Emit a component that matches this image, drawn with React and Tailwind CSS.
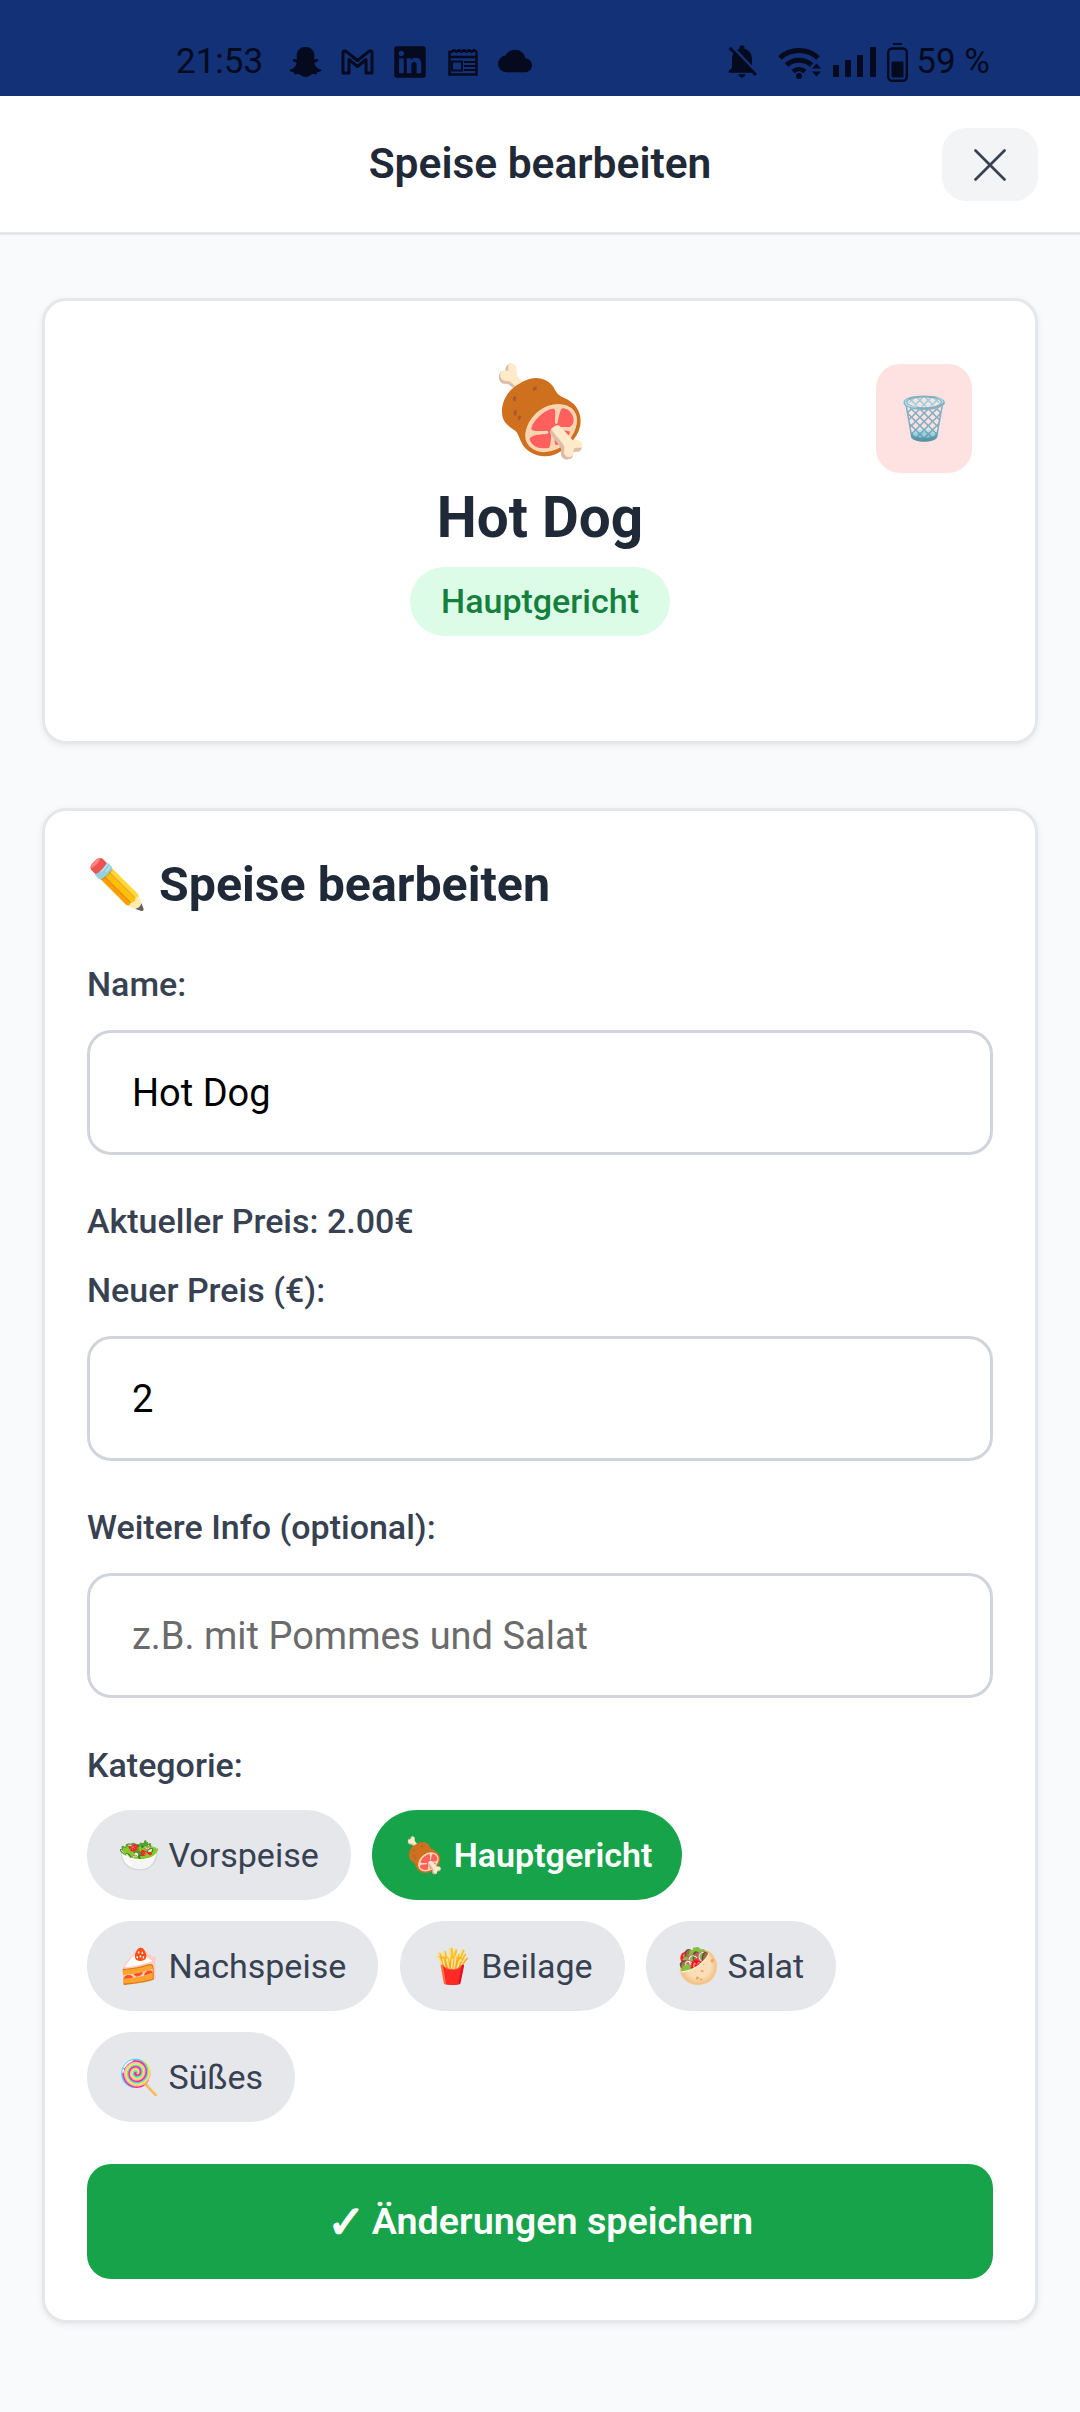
import React from 'react';
import { X } from 'lucide-react';
import { FaSnapchatGhost, FaLinkedin } from 'react-icons/fa';
import { MdCloud, MdNotificationsOff } from 'react-icons/md';

const roboto = { fontFamily: 'Roboto, "Noto Sans", sans-serif' };

const GmailIcon = () => (
  <svg viewBox="0 0 33 26" className="w-[33px] h-[26px] ml-[19px]" fill="none" stroke="currentColor" strokeWidth="3" strokeLinejoin="round">
    <path d="M2 24V3.5C2 2 4 1.5 5 2.3L16.500 11.500 28 2.300C29 1.500 31 2 31 3.500V24H25V10.500L16.500 17.500 8 10.500V24Z" />
  </svg>
);

const NewsIcon = () => (
  <svg viewBox="0 0 30 27" className="w-[30px] h-[27px] ml-[20px]" fill="none" stroke="currentColor" strokeWidth="2.500">
    <path d="M1.500 3V25.500H28.500V3L26 1 23.500 3 21 1 18.500 3 16 1 13.500 3 11 1 8.500 3 6 1 3.500 3Z" />
    <path d="M1.500 8H28.500" />
    <path d="M4 12.500H14V21.500H4Z" strokeWidth="2" />
    <path d="M16 13H28M16 17H28M16 21H28" strokeWidth="1.800" />
  </svg>
);

const WifiIcon = () => (
  <svg viewBox="0 0 44 34" className="w-[44px] h-[34px] ml-[16px]" fill="none" stroke="currentColor">
    <path d="M2 13C12 3 30 3 40 13" strokeWidth="5" />
    <path d="M8.500 20C15 13.500 27 13.500 33.500 20" strokeWidth="5" />
    <path d="M15 26.500C18.500 23.500 23.500 23.500 27 26.500" strokeWidth="4.500" />
    <circle cx="21" cy="31" r="3" fill="currentColor" stroke="none" />
    <path d="M34 23.500L38.500 18.500 43 23.500Z M34 26.500L38.500 31.500 43 26.500Z" fill="currentColor" stroke="none" />
  </svg>
);

const SignalIcon = () => (
  <svg viewBox="0 0 43 30" className="w-[43px] h-[30px] ml-[11px]" fill="currentColor">
    <rect x="0" y="18" width="6" height="12" rx="1" />
    <rect x="12" y="13" width="6" height="17" rx="1" />
    <rect x="24" y="8" width="6" height="22" rx="1" />
    <rect x="37" y="0" width="6" height="30" rx="1" />
  </svg>
);

const BatteryIcon = () => (
  <svg viewBox="0 0 21 39" className="w-[21px] h-[39px] ml-[11px]" fill="none" stroke="currentColor">
    <path d="M6 1H15" strokeWidth="2" />
    <rect x="1.200" y="5.500" width="18.600" height="32.300" rx="4" strokeWidth="2.400" />
    <rect x="4.500" y="18.500" width="12" height="16" rx="1" fill="currentColor" stroke="none" />
  </svg>
);

const StatusBar = () => (
  <div className="h-[96px] bg-[#123177] flex items-center justify-between pl-[176px] pr-[90px] pt-[28px] text-[#050a1e] text-[35px] leading-[40px]">
    <div className="flex items-center">
      <span>21:53</span>
      <FaSnapchatGhost className="w-[33px] h-[32px] ml-[26px]" />
      <GmailIcon />
      <FaLinkedin className="w-[36px] h-[36px] ml-[18px]" />
      <NewsIcon />
      <MdCloud className="w-[34px] h-[34px] ml-[20px] -translate-y-[1px]" />
    </div>
    <div className="flex items-center">
      <MdNotificationsOff className="w-[40px] h-[40px] -translate-y-[1px]" />
      <WifiIcon />
      <SignalIcon />
      <BatteryIcon />
      <span className="ml-[8px]">59 %</span>
    </div>
  </div>
);

const categories = [
  { emoji: '🥗', name: 'Vorspeise' },
  { emoji: '🍖', name: 'Hauptgericht', active: true },
  { emoji: '🍰', name: 'Nachspeise' },
  { emoji: '🍟', name: 'Beilage' },
  { emoji: '🥙', name: 'Salat' },
  { emoji: '🍭', name: 'Süßes' },
];

const Field = ({ label, value, placeholder }) => (
  <div>
    <div className="text-[34px] leading-[40px] font-medium text-[#374151] mb-[26px]">{label}</div>
    <input
      readOnly
      value={value}
      placeholder={placeholder}
      className="w-full h-[125px] px-[42px] border-[3px] border-[#d1d5db] rounded-[24px] text-[38px] text-black placeholder:text-[#6b6b6b] bg-white"
    />
  </div>
);

export default function App() {
  return (
    <div className="min-h-[2412px] bg-[#f9fafb]" style={roboto}>
      <StatusBar />
      <div className="relative h-[139px] bg-white border-b-[3px] border-[#e5e7eb] flex items-center justify-center">
        <h1 className="text-[42.5px] font-semibold text-[#1f2937]">Speise bearbeiten</h1>
        <button className="absolute right-[42px] top-[32px] w-[96px] h-[73px] bg-[#f3f4f6] rounded-[24px] flex items-center justify-center text-[#374151]">
          <X size={58} strokeWidth={1.1} />
        </button>
      </div>

      <div className="px-[42px] pt-[63px]">
        <div className="relative h-[446px] bg-white border-[3px] border-[#e5e7eb] rounded-[24px] shadow-[0_2px_6px_rgba(0,0,0,0.07)] flex flex-col items-center pt-[61px]">
          <div className="text-[86px] leading-[100px]">🍖</div>
          <div className="text-[56.7px] leading-[70px] font-bold text-[#1f2937] mt-[21px]">Hot Dog</div>
          <div className="mt-[14px] h-[69px] px-[31px] rounded-full bg-[#dcfce7] text-[#15803d] text-[34px] font-medium flex items-center">Hauptgericht</div>
          <button className="absolute right-[63px] top-[63px] w-[96px] h-[109px] rounded-[24px] bg-[#fee2e2] text-[42px] flex items-center justify-center">🗑️</button>
        </div>

        <div className="mt-[64px] bg-white border-[3px] border-[#e5e7eb] rounded-[24px] shadow-[0_2px_6px_rgba(0,0,0,0.07)] px-[42px] pt-[44px] pb-[41px]">
          <h2 className="text-[48.3px] leading-[60px] font-bold text-[#1f2937]">✏️ Speise bearbeiten</h2>
          <div className="mt-[49px]">
            <Field label="Name:" value="Hot Dog" />
          </div>
          <div className="mt-[46px] text-[34px] leading-[40px] font-medium text-[#374151]">Aktueller Preis: 2.00€</div>
          <div className="mt-[29px]">
            <Field label="Neuer Preis (€):" value="2" />
          </div>
          <div className="mt-[46px]">
            <Field label="Weitere Info (optional):" placeholder="z.B. mit Pommes und Salat" />
          </div>
          <div className="mt-[47px] text-[34px] leading-[40px] font-medium text-[#374151]">Kategorie:</div>
          <div className="mt-[25px] flex flex-wrap gap-x-[21.5px] gap-y-[21px]">
            {categories.map((c) => (
              <div
                key={c.name}
                className={c.active
                  ? 'h-[90px] pl-[31px] pr-[30px] rounded-full bg-[#16a34a] text-white font-semibold text-[34px] flex items-center'
                  : 'h-[90px] pl-[31px] pr-[32px] rounded-full bg-[#e5e7eb] text-[#374151] text-[34px] flex items-center'}
              >
                {c.emoji} {c.name}
              </div>
            ))}
          </div>
          <button className="mt-[42px] w-full h-[115px] rounded-[24px] bg-[#16a34a] text-white text-[37.7px] font-semibold flex items-center justify-center">
            <span className="text-[46px] leading-none mr-[6px]">✓</span>
            <span>Änderungen speichern</span>
          </button>
        </div>
      </div>
    </div>
  );
}
